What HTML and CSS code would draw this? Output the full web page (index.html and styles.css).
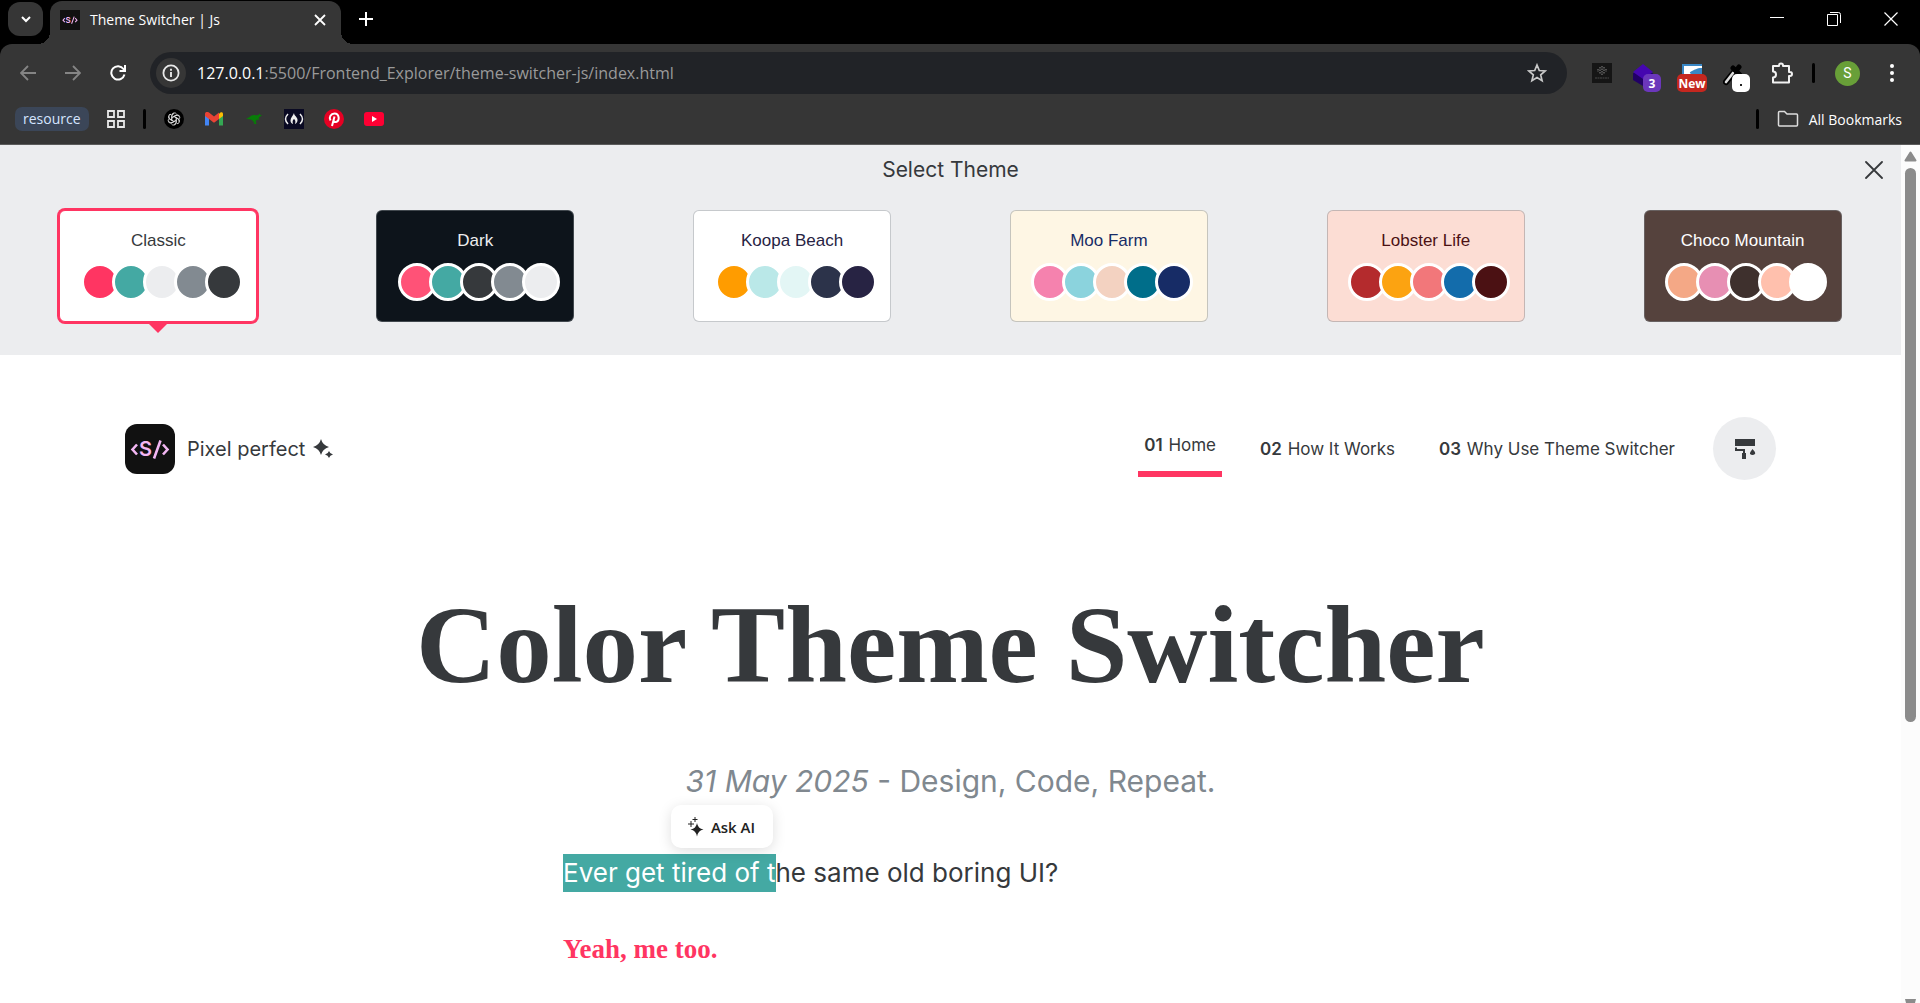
FILE: index.html
```html
<!DOCTYPE html>
<html lang="en">
<head>
<meta charset="utf-8">
<title>Theme Switcher | Js</title>
<link rel="stylesheet" href="styles.css">
</head>
<body>
<svg class="defs" aria-hidden="true">
  <symbol id="brand" viewBox="0 0 50 50">
    <path d="M12 20.5 7.500 25.500l4.500 5M38 20.500l4.500 5-4.500 5M35.500 16.500 29 34.500" fill="none" stroke="#f3b6f3" stroke-width="2.600"/>
    <text x="20.500" y="32" text-anchor="middle" font-family="Inter, sans-serif" font-size="20" font-weight="600" fill="#f3b6f3">S</text>
  </symbol>
</svg>

<header class="browser">
  <div class="tabstrip">
    <button class="tab-search" aria-label="Search tabs"><svg width="12" height="12" viewBox="0 0 12 12"><path d="M2 4l4 4 4-4" fill="none" stroke="#fff" stroke-width="2"/></svg></button>
    <div class="tab">
      <svg class="favicon" width="20" height="20"><rect width="20" height="20" fill="#111"/><use href="#brand" width="20" height="20"/></svg>
      <span class="tab-title">Theme Switcher | Js</span>
      <button class="plain" aria-label="Close tab"><svg width="12" height="12" viewBox="0 0 12 12"><path d="M1 1l10 10M11 1 1 11" stroke="#fff" stroke-width="1.800"/></svg></button>
    </div>
    <button class="plain new-tab" aria-label="New tab"><svg width="14" height="14" viewBox="0 0 14 14"><path d="M7 0v14M0 7h14" stroke="#fff" stroke-width="2"/></svg></button>
    <div class="window-controls">
      <button class="plain" aria-label="Minimize"><svg width="14" height="14" viewBox="0 0 14 14"><path d="M0 5.500h14" stroke="#fff"/></svg></button>
      <button class="plain" aria-label="Restore"><svg width="14" height="14" viewBox="0 0 14 14"><path d="M.5 2.500h10v11H.5zM3 .5h8.500a2 2 0 0 1 2 2V11" fill="none" stroke="#fff"/></svg></button>
      <button class="plain" aria-label="Close window"><svg width="14" height="14" viewBox="0 0 14 14"><path d="M.5.5l13 13M13.500.5l-13 13" stroke="#fff" stroke-width="1.200"/></svg></button>
    </div>
  </div>

  <div class="toolbar">
    <div class="nav-buttons">
      <button class="plain" aria-label="Back"><svg width="16" height="16" viewBox="0 0 16 16"><path d="M8 1 1 8l7 7M1 8h15" fill="none" stroke="#858585" stroke-width="1.800"/></svg></button>
      <button class="plain" aria-label="Forward"><svg width="16" height="16" viewBox="0 0 16 16"><path d="M8 1l7 7-7 7M15 8H0" fill="none" stroke="#858585" stroke-width="1.800"/></svg></button>
      <button class="plain" aria-label="Reload"><svg width="16" height="16" viewBox="0 0 16 16"><path d="M14.500 9.500A6.700 6.700 0 1 1 13.500 4L15 5.500M15 0v6H9.500" fill="none" stroke="#fff" stroke-width="2"/></svg></button>
    </div>
    <div class="omnibox">
      <button class="site-info" aria-label="Site information"><svg width="18" height="18" viewBox="0 0 18 18"><circle cx="9" cy="9" r="7.600" fill="none" stroke="#e8e8e8" stroke-width="1.800"/><path d="M9 8v5M9 4.700v2" stroke="#e8e8e8" stroke-width="1.900"/></svg></button>
      <span class="url"><b>127.0.0.1</b>:5500/Frontend_Explorer/theme-switcher-js/index.html</span>
      <button class="plain" aria-label="Bookmark this page"><svg width="20" height="20" viewBox="0 0 20 20"><path d="M10 2l2.300 5.500 5.900.5-4.500 3.900 1.400 5.800L10 14.600l-5.100 3.100 1.400-5.800L1.800 8l5.900-.5z" fill="none" stroke="#c9c9c9" stroke-width="1.700"/></svg></button>
    </div>
    <div class="extensions">
      <svg width="20" height="20" viewBox="0 0 20 20"><rect width="20" height="20" fill="#151515"/><path d="M10 3v9M8 4v7M12 4v7M6 6v3M14 6v3" stroke="#888" stroke-dasharray="1.500 1"/><path d="M3 15h14" stroke="#4a4a4a" stroke-dasharray="2 .5"/></svg>
      <svg class="with-badge" width="28" height="28" viewBox="0 0 28 28"><path d="M0 16l10 6 10-6V9H0z" fill="#210066"/><path d="M10 0l10 8-10 7L0 8z" fill="#4506b0"/><rect x="10" y="10" width="18" height="18" rx="5" fill="#6b37bb"/><text x="19" y="24" text-anchor="middle" class="badge-text">3</text></svg>
      <svg class="with-badge" width="30" height="28" viewBox="0 0 30 28"><path d="M5 0h20v14H5z" fill="#fff"/><path d="M5 0h20v2H5zM5 0h2v10H5zM25 4v6h-9c-4 0-4-2-1-3 3-1 4-3 10-3z" fill="#3987c5"/><rect y="10" width="30" height="18" rx="5" fill="#c5271f"/><text x="15" y="24" text-anchor="middle" class="badge-text">New</text></svg>
      <svg class="with-badge" width="27" height="28" viewBox="0 0 27 28"><path d="M3 18 12 7" stroke="#000" stroke-width="6" stroke-linecap="round"/><path d="M3 18 10 9" stroke="#ddd" stroke-width="2.600" stroke-linecap="round"/><path d="M10 4l7 7M13 7l3-4" stroke="#000" stroke-width="5" stroke-linecap="round"/><rect x="9" y="10" width="18" height="18" rx="5" fill="#fff"/><rect x="17" y="20" width="2" height="2" fill="#222"/></svg>
      <svg width="22" height="22" viewBox="0 0 22 22"><path d="M2 4h6V3.500a2 2 0 0 1 4 0V4h6v6h1a2 2 0 0 1 0 4h-1v6.500H2v-5c4 0 4-6 0-6z" fill="none" stroke="#f1f1f1" stroke-width="2" stroke-linejoin="round"/></svg>
    </div>
    <span class="divider"></span>
    <span class="avatar">S</span>
    <button class="plain menu" aria-label="Menu"><svg width="4" height="18" viewBox="0 0 4 18"><g fill="#fff"><circle cx="2" cy="2" r="2"/><circle cx="2" cy="9" r="2"/><circle cx="2" cy="16" r="2"/></g></svg></button>
  </div>

  <nav class="bookmarks" aria-label="Bookmarks">
    <a class="chip" href="#resource">resource</a>
    <svg class="apps" width="18" height="18" viewBox="0 0 18 18"><path d="M1 1h6v6H1zM11 1h6v6h-6zM1 11h6v6H1zM11 11h6v6h-6z" fill="none" stroke="#e8e8e8" stroke-width="1.800"/></svg>
    <span class="divider"></span>
    <div class="sites">
      <a href="#chat" aria-label="ChatGPT"><svg width="20" height="20" viewBox="0 0 20 20"><circle cx="10" cy="10" r="10" fill="#000"/><g fill="none" stroke="#ddd" stroke-width=".9"><path id="petal" d="M7.800 10.500V6.300a2.600 2.600 0 0 1 4.800-1.200M7.800 8.700l3.700-2.100a2.600 2.600 0 0 1 3.300.6"/><use href="#petal" transform="rotate(60 10 10)"/><use href="#petal" transform="rotate(120 10 10)"/><use href="#petal" transform="rotate(180 10 10)"/><use href="#petal" transform="rotate(240 10 10)"/><use href="#petal" transform="rotate(300 10 10)"/></g></svg></a>
      <a href="#mail" aria-label="Gmail"><svg width="20" height="20" viewBox="0 0 20 20"><path d="M1 5v11.500h4V8z" fill="#4285f4"/><path d="M19 5v11.500h-4V8z" fill="#34a853"/><path d="M15 5v5l4-3V5c0-2-2.500-2.500-4 0z" fill="#fbbc04"/><path d="M1 7V5c0-2 2-2.500 4-1.500l5 4 5-4V10l-5 3.700L5 10z" fill="#ea4335"/></svg></a>
      <a href="#kangaroo" aria-label="Kangaroo"><svg width="20" height="20" viewBox="0 0 20 20"><path d="M1 9.800C5 9.800 6 6 10 6c2 0 3 .8 4.500 0l.8-1.500.9 1.200 1.800 1-2.500 1-1 2 1.200 1.500-2.500-.7-1.500 1.500.8 3H9.500l1-1-2.500-3C6 10 4 10.500 1 9.800z" fill="#087c08"/></svg></a>
      <a href="#code" aria-label="freeCodeCamp"><svg width="20" height="20" viewBox="0 0 20 20"><rect width="20" height="20" fill="#0a0a23"/><path d="M4 5Q-1 10 4 15M16 5q5 5 0 10" fill="none" stroke="#eee" stroke-width="1.500"/><path d="M10 4c0 3 4 4 3.500 7.500-.2 2-1.300 3-2.500 3.500 1-3 0-4-1-5-1 1-2 2-1 5-1.500-.5-2.500-1.500-2.500-3.500C6.500 8.500 9 7 10 4z" fill="#eee"/></svg></a>
      <a href="#pins" aria-label="Pinterest"><svg width="20" height="20" viewBox="0 0 20 20"><circle cx="10" cy="10" r="10" fill="#e60023"/><path d="M6.500 11.500C4.500 8 7 4.500 10.500 4.500c5 0 5.500 7.500 1.500 8.500-1 .2-2-.3-2.300-1M10.500 7.500 8 17" fill="none" stroke="#fff" stroke-width="2"/></svg></a>
      <a href="#video" aria-label="YouTube"><svg width="20" height="20" viewBox="0 0 20 20"><rect y="3" width="20" height="14" rx="3" fill="#ff0033"/><path d="M8 7v6l5-3z" fill="#fff"/></svg></a>
    </div>
    <span class="divider push"></span>
    <a class="all" href="#all"><svg width="22" height="18" viewBox="0 0 22 18"><path d="M1.500 15V2.500q0-1 1-1h5l2.500 2.500h9.500q1 0 1 1v10q0 1-1 1h-17q-1 0-1-1z" fill="none" stroke="#ddd" stroke-width="1.500"/></svg>All Bookmarks</a>
  </nav>
</header>

<div class="viewport">
  <main class="page">
    <section class="themes">
      <h2 class="themes-title">Select Theme</h2>
      <button class="plain themes-close" aria-label="Close"><svg width="18" height="18" viewBox="0 0 18 18"><path d="M1 1l16 16M17 1 1 17" stroke="#36393c" stroke-width="1.800" stroke-linecap="round"/></svg></button>
      <div class="theme-grid">
        <button class="theme classic selected">Classic<span class="swatches"><i></i><i></i><i></i><i></i><i></i></span></button>
        <button class="theme dark">Dark<span class="swatches"><i></i><i></i><i></i><i></i><i></i></span></button>
        <button class="theme koopa">Koopa Beach<span class="swatches"><i></i><i></i><i></i><i></i><i></i></span></button>
        <button class="theme moo">Moo Farm<span class="swatches"><i></i><i></i><i></i><i></i><i></i></span></button>
        <button class="theme lobster">Lobster Life<span class="swatches"><i></i><i></i><i></i><i></i><i></i></span></button>
        <button class="theme choco">Choco Mountain<span class="swatches"><i></i><i></i><i></i><i></i><i></i></span></button>
      </div>
    </section>

    <div class="site-header">
      <a class="brand" href="#home">
        <svg class="logo" width="50" height="50"><use href="#brand" width="50" height="50"/></svg>
        <span>Pixel perfect</span>
        <svg width="20" height="20" viewBox="0 0 20 20"><path d="M8 0q1.500 6 8 8-6.500 2-8 8-1.500-6-8-8 6.500-2 8-8zM16 12q.8 2.700 4 3.500-3.200.8-4 3.500-.8-2.700-4-3.500 3.200-.8 4-3.500z" fill="#36393c"/></svg>
      </a>
      <nav class="menu-links" aria-label="Main">
        <a class="active" href="#home"><b>01</b> Home</a>
        <a href="#how"><b>02</b> How It Works</a>
        <a href="#why"><b>03</b> Why Use Theme Switcher</a>
      </nav>
      <button class="paint" aria-label="Change theme"><svg width="22" height="22" viewBox="0 0 22 22"><path d="M1 1h20v7H1z" fill="#36393c"/><path d="M2 9.500v2.500h8v9" fill="none" stroke="#36393c" stroke-width="2"/><path d="M8 15h4v6H8zM18.500 11q3.500 3.500 2.500 5-2.500 2-5 0-.5-1.500 2.500-5z" fill="#36393c"/></svg></button>
    </div>

    <article class="post">
      <h1>Color Theme Switcher</h1>
      <p class="tagline"><em>31 May 2025</em> - Design, Code, Repeat.</p>
      <div class="story">
        <p class="lead"><mark>Ever get tired of t<button class="ask"><svg width="16" height="20" viewBox="0 0 16 20"><path d="M9 6q.8 5.500 6.500 6.500Q10 13.500 9 19.500 8 13.500 2.500 12.500 8.200 11.500 9 6z" fill="#222"/><path d="M3 4v6M0 7h6M7 0v5M4.500 2.500h5" stroke="#222"/></svg>Ask AI</button></mark>he same old boring UI?</p>
        <p class="answer">Yeah, me too.</p>
      </div>
    </article>
  </main>

  <div class="scrollbar" aria-hidden="true">
    <svg width="13" height="11" viewBox="0 0 13 11"><path d="M6.500 1.500l5 8h-10z" fill="#8b8b8b" stroke="#8b8b8b" stroke-width="2" stroke-linejoin="round"/></svg>
    <div class="thumb"></div>
    <svg class="down" width="13" height="4" viewBox="0 0 13 4"><path d="M1 0h11l-1 4H2z" fill="#8b8b8b"/></svg>
  </div>
</div>
</body>
</html>
```
FILE: styles.css
```css
* { box-sizing: border-box; }

body {
  margin: 0;
  height: 100vh;
  display: flex;
  flex-direction: column;
  overflow: hidden;
  color: #36393c;
  background: #fff;
  font-family: Inter, sans-serif;
}

svg { display: block; flex: none; }
a { color: inherit; text-decoration: none; }
button { font: inherit; color: inherit; cursor: pointer; }
h1, h2, p { margin: 0; }

.defs { display: none; }
.plain { border: 0; padding: 0; background: none; }

/* Browser frame */
.browser {
  flex: none;
  background: #000;
  color: #fff;
  font-family: "Open Sans", sans-serif;
}

.tabstrip {
  display: flex;
  align-items: center;
  height: 44px;
  padding: 0 22px 0 8px;
}

.tab-search {
  display: grid;
  place-items: center;
  width: 35px;
  height: 34px;
  margin: 0 7px 6px 0;
  padding: 0;
  border: 0;
  border-radius: 12px;
  background: #363636;
}

.tab {
  position: relative;
  display: flex;
  align-items: center;
  gap: 10px;
  width: 291px;
  height: 43px;
  margin-top: 1px;
  padding: 0 15px 6px 10px;
  border-radius: 12px 12px 0 0;
  background: #363636;
}

.tab::before,
.tab::after {
  content: "";
  position: absolute;
  bottom: 0;
  width: 12px;
  height: 12px;
}

.tab::before {
  right: 100%;
  background: radial-gradient(circle at 0 0, transparent 12px, #363636 12px);
}

.tab::after {
  left: 100%;
  background: radial-gradient(circle at 100% 0, transparent 12px, #363636 12px);
}

.tab-title { flex: 1; font-size: 14px; }
.new-tab { margin: 0 0 6px 18px; }

.window-controls {
  display: flex;
  gap: 43px;
  margin: 0 0 6px auto;
}

.toolbar {
  display: flex;
  align-items: center;
  height: 58px;
  padding: 0 26px 0 20px;
  border-radius: 12px 12px 0 0;
  background: #363636;
}

.nav-buttons { display: flex; gap: 29px; }

.omnibox {
  flex: 1;
  display: flex;
  align-items: center;
  height: 42px;
  margin: 0 12px 0 24px;
  padding: 0 20px 0 6px;
  border-radius: 21px;
  background: #212327;
}

.site-info {
  display: grid;
  place-items: center;
  width: 30px;
  height: 30px;
  margin-right: 11px;
  padding: 0;
  border: 0;
  border-radius: 50%;
  background: #363636;
}

.url { flex: 1; font-size: 16px; color: #9a9a9a; }
.url b { font-weight: 400; color: #fff; }

.extensions {
  display: grid;
  grid-template-columns: repeat(5, 45px);
  align-items: center;
  justify-items: center;
}

.with-badge { margin-top: 9px; }
.badge-text { font: 700 12px "Open Sans", sans-serif; fill: #fff; }

.divider { width: 3px; height: 20px; border-radius: 2px; background: #000; }
.toolbar .divider { margin: 0 20px 0 8px; }

.avatar {
  width: 25px;
  height: 25px;
  border-radius: 50%;
  background: #689f38;
  font: 14px/25px Roboto, sans-serif;
  text-align: center;
}

.menu { margin-left: 30px; }

.bookmarks {
  display: flex;
  align-items: center;
  height: 43px;
  padding: 0 18px 8px 15px;
  border-bottom: 1px solid #5b5b5b;
  background: #363636;
  font-size: 14px;
}

.chip {
  padding: 0 8px;
  border-radius: 7px;
  background: #3b4658;
  color: #d5e5ff;
  line-height: 24px;
}

.apps { margin: 0 18px; }
.sites { display: flex; gap: 20px; margin-left: 18px; }
.push { margin-left: auto; }
.all { display: flex; align-items: center; gap: 10px; margin-left: 18px; }

/* Page area */
.viewport { flex: 1; display: flex; min-height: 0; }
.page { flex: 1; overflow: hidden; }

.scrollbar {
  display: flex;
  flex-direction: column;
  align-items: center;
  gap: 6px;
  width: 19px;
  padding-top: 6px;
  background: #fcfcfc;
}

.thumb { width: 11px; height: 65%; border-radius: 6px; background: #8b8b8b; }
.down { margin-top: auto; }

/* Theme picker */
.themes {
  position: relative;
  height: 210px;
  padding-top: 10px;
  background: #ecedef;
}

.themes-title {
  font-size: 21px;
  font-weight: 400;
  line-height: 30px;
  text-align: center;
}

.themes-close { position: absolute; top: 16px; right: 18px; }

.theme-grid {
  display: grid;
  grid-template-columns: repeat(6, 1fr);
  justify-items: center;
  margin-top: 25px;
}

.theme {
  position: relative;
  width: 198px;
  height: 112px;
  padding: 0;
  border: 1px solid rgba(128, 136, 143, .45);
  border-radius: 6px;
  font: 17px/20px "Liberation Sans", sans-serif;
}

.swatches { display: flex; justify-content: center; margin-top: 12px; }

.swatches i {
  width: 38px;
  height: 38px;
  margin-right: -7px;
  border: 3px solid #fff;
  border-radius: 50%;
  background: var(--c);
}

.selected { border-color: #ff3562; box-shadow: 0 0 0 2px #ff3562; }

.selected::after {
  content: "";
  position: absolute;
  top: 100%;
  left: 50%;
  margin: 2px 0 0 -10px;
  border: 10px solid transparent;
  border-top-color: #ff3562;
  border-bottom: 0;
}

.classic { background: #fff; color: #36393c; }
.classic i:nth-child(1) { --c: #ff3562; }
.classic i:nth-child(2) { --c: #44a9a3; }
.classic i:nth-child(3) { --c: #ecedef; }
.classic i:nth-child(4) { --c: #828a91; }
.classic i:nth-child(5) { --c: #36393c; }

.dark { background: #0d141b; color: #ecedef; }
.dark i:nth-child(1) { --c: #ff5277; }
.dark i:nth-child(2) { --c: #44a9a3; }
.dark i:nth-child(3) { --c: #36393c; }
.dark i:nth-child(4) { --c: #828a91; }
.dark i:nth-child(5) { --c: #ecedef; }

.koopa { background: #fff; color: #272343; }
.koopa i:nth-child(1) { --c: #ff9c00; }
.koopa i:nth-child(2) { --c: #bae8e8; }
.koopa i:nth-child(3) { --c: #e3f6f5; }
.koopa i:nth-child(4) { --c: #2c334a; }
.koopa i:nth-child(5) { --c: #272343; }

.moo { background: #fef6e4; color: #172c66; }
.moo i:nth-child(1) { --c: #f582ae; }
.moo i:nth-child(2) { --c: #8bd3dd; }
.moo i:nth-child(3) { --c: #f3d2c1; }
.moo i:nth-child(4) { --c: #006e8a; }
.moo i:nth-child(5) { --c: #172c66; }

.lobster { background: #fcddd4; color: #4b1113; }
.lobster i:nth-child(1) { --c: #b42b2d; }
.lobster i:nth-child(2) { --c: #fca311; }
.lobster i:nth-child(3) { --c: #f2777a; }
.lobster i:nth-child(4) { --c: #136cab; }
.lobster i:nth-child(5) { --c: #4b1113; }

.choco { background: #55423d; color: #fff; }
.choco i:nth-child(1) { --c: #f4a886; }
.choco i:nth-child(2) { --c: #e78fb3; }
.choco i:nth-child(3) { --c: #3e302d; }
.choco i:nth-child(4) { --c: #ffc0ad; }
.choco i:nth-child(5) { --c: #fff; }

/* Site header */
.site-header {
  display: flex;
  align-items: center;
  margin-top: 62px;
  padding: 0 125px;
}

.brand { display: flex; align-items: center; font-size: 20px; }
.brand span { margin: 0 8px 0 12px; }
.logo { border-radius: 12px; background: #111; }

.menu-links { display: flex; align-items: center; gap: 32px; margin-left: auto; font-size: 17px; }
.menu-links a { padding: 0 6px; line-height: 24px; }
.menu-links b { margin-right: 1px; font-weight: 600; }
.menu-links .active { padding-top: 12px; padding-bottom: 14px; border-bottom: 6px solid #ff3562; }

.paint {
  display: grid;
  place-items: center;
  width: 63px;
  height: 63px;
  margin-left: 32px;
  padding: 0;
  border: 0;
  border-radius: 50%;
  background: #ecedef;
}

/* Article */
.post { padding-top: 100px; text-align: center; }

h1 {
  font: 700 111px/130px "Liberation Serif", serif;
}

.tagline { margin-top: 48px; font-size: 30px; line-height: 46px; color: #80888f; }

.story {
  width: 775px;
  max-width: 100%;
  margin: 50px auto 0;
  font-size: 26px;
  line-height: 38px;
  text-align: left;
}

.lead mark {
  position: relative;
  display: inline-block;
  background: #44a9a3;
  color: #fff;
}

.ask {
  position: absolute;
  right: 3px;
  bottom: 44px;
  display: flex;
  align-items: center;
  justify-content: center;
  gap: 7px;
  width: 102px;
  height: 43px;
  padding: 0;
  border: 0;
  border-radius: 10px;
  background: #fff;
  box-shadow: 0 3px 14px rgba(0, 0, 0, .13);
  color: #222;
  font: 600 15px "Open Sans", sans-serif;
}

.answer {
  margin-top: 38px;
  color: #ff3562;
  font: 700 27px/38px "Liberation Serif", serif;
}
```
